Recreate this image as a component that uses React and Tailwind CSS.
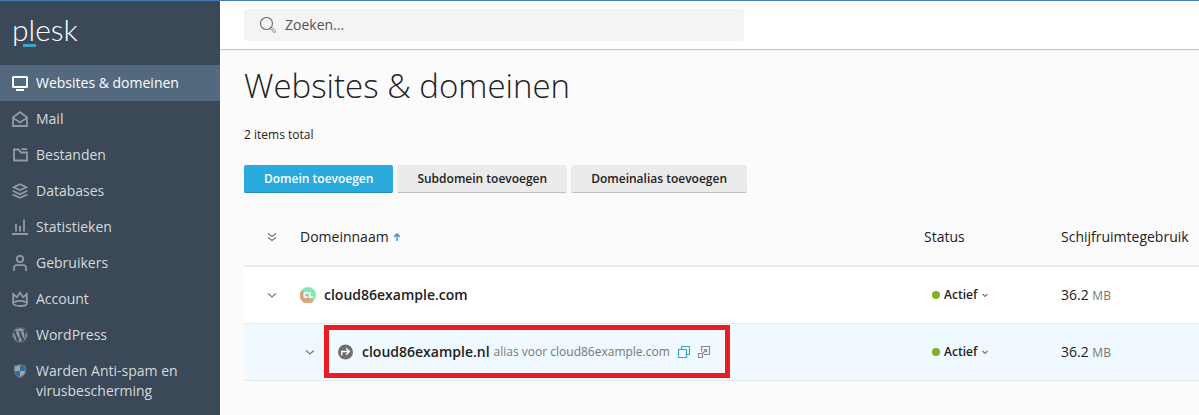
import { FaWordpress } from 'react-icons/fa6';
import clsx from 'clsx';

const Icon = ({ size = 16, className, children }) => (
    <svg width={size} height={size} viewBox={`0 0 ${size} ${size}`} fill="none" stroke="currentColor"
        strokeWidth="1.8" className={clsx('shrink-0', className)} aria-hidden="true">
        {children}
    </svg>
);

const MonitorIcon = () => (
    <Icon>
        <rect x="1" y="2" width="14" height="10" rx="0.5" strokeWidth="2" />
        <path d="M4 15h8" strokeWidth="2" />
    </Icon>
);

const MailIcon = () => (
    <Icon>
        <path d="M1 6.200 8 1.200l7 5V15H1z" />
        <path d="M1 6.800l7 4.600 7-4.600" />
    </Icon>
);

const FolderIcon = () => (
    <Icon>
        <path d="M2 1.500V13.500h13V5.500H9L6.500 2.500H1.100M9.500 2.200H15" />
    </Icon>
);

const LayersIcon = () => (
    <Icon>
        <path d="M8 1.300l6.400 2.900L8 7.100 1.600 4.200z" />
        <path d="M0.600 7.800L8 11.200l7.400-3.400M0.600 11.400L8 14.800l7.400-3.400" />
    </Icon>
);

const StatsIcon = () => (
    <Icon>
        <path d="M0 15h16M4 12.500V5M8 12.500V7M12 12.500V0.500" />
    </Icon>
);

const UserIcon = () => (
    <Icon>
        <circle cx="8" cy="4" r="3.200" />
        <path d="M2 16v-3.200a2.600 2.600 0 0 1 2.600-2.600h6.800a2.600 2.600 0 0 1 2.600 2.600V16" />
    </Icon>
);

const CrownIcon = () => (
    <Icon>
        <path d="M1.200 12.800V3.200l3.800 3L8 1.600l3 4.600 3.800-3v9.600" />
        <ellipse cx="8" cy="12.400" rx="6.800" ry="2.600" />
    </Icon>
);

const ShieldIcon = () => (
    <Icon>
        <g stroke="none">
            <path d="M2 2.500Q5 2.500 8 1q3 1.500 6 1.500V7c0 4-2.500 6.500-6 8-3.500-1.500-6-4-6-8z" fill="#6f7c87" />
            <path d="M8 2.300q2.300 1 5 1.200V8H8z" fill="#2f6f9f" />
            <path d="M3 8h5v5.800C5 12.500 3.200 10.800 3 8z" fill="#2f6f9f" />
            <path d="M3 3.500q2.700-.2 5-1.200V8H3z" fill="#9aa5ae" />
            <path d="M8 8h5c-.2 2.800-2 4.500-5 5.800z" fill="#9aa5ae" />
        </g>
    </Icon>
);

const SearchIcon = () => (
    <Icon className="text-[#777777]">
        <circle cx="6.500" cy="6.500" r="6" strokeWidth="1.200" />
        <path d="M10.500 10.500l1.200 0 3.600 3.400a1 1 0 0 1-1.400 1.400L10.400 11.700z" strokeWidth="1" />
    </Icon>
);

const ChevronIcon = ({ size = 10 }) => (
    <Icon size={size} className="text-[#777777]">
        {size === 10 ? <path d="M1 3.500l4 3.500 4-3.500" strokeWidth="1.200" /> : <path d="M1.500 3l2.500 2.500L6.500 3" strokeWidth="1.200" />}
    </Icon>
);

const navItems = [
    { label: 'Websites & domeinen', icon: <MonitorIcon />, active: true },
    { label: 'Mail', icon: <MailIcon /> },
    { label: 'Bestanden', icon: <FolderIcon /> },
    { label: 'Databases', icon: <LayersIcon /> },
    { label: 'Statistieken', icon: <StatsIcon /> },
    { label: 'Gebruikers', icon: <UserIcon /> },
    { label: 'Account', icon: <CrownIcon /> },
    { label: 'WordPress', icon: <FaWordpress size={16} className="shrink-0" /> },
    { label: 'Warden Anti-spam en virusbescherming', icon: <ShieldIcon /> },
];

const Sidebar = () => (
    <aside className="w-[220px] shrink-0 bg-[#3a4857]">
        <a href="#" className="relative flex h-16 items-center px-3 pb-2 font-[Lato] text-[30px] leading-8 font-light text-white">
            plesk
            <span className="absolute left-[23px] top-[43px] h-[3px] w-[13px] bg-[#3fa3bd]" />
        </a>
        <nav>
            {navItems.map(({ label, icon, active }) => (
                <a key={label} href="#"
                    className={clsx('flex gap-2 px-3 py-2 text-sm leading-5 font-medium',
                        active ? 'bg-[#536a7e] text-white' : 'text-[#d5dade]')}>
                    <span className={clsx('flex h-5 items-center', !active && 'text-[#909aa4]')}>{icon}</span>
                    {label}
                </a>
            ))}
        </nav>
    </aside>
);

const Button = ({ primary, children }) => (
    <button type="button"
        className={clsx('h-7 rounded-xs border-b px-5 text-xs font-semibold',
            primary ? 'border-[#1f88b5] bg-[#28aade] text-white' : 'border-[#bfbfbf] bg-[#ebebeb] text-[#222222]')}>
        {children}
    </button>
);

const StatusCell = () => (
    <td className="px-3">
        <button type="button" className="flex items-center gap-1 px-2 text-xs font-semibold">
            <span className="size-2 rounded-full bg-[#80b025]" />
            Actief
            <ChevronIcon size={8} />
        </button>
    </td>
);

const UsageCell = () => (
    <td className="pr-2 pl-3 text-sm">
        36.2 <span className="text-xs text-[#777777]">MB</span>
    </td>
);

const DomainTable = () => (
    <table className="mt-4 w-full border-collapse text-left">
        <thead>
            <tr className="h-[57px] border-b-2 border-[#ebebeb] text-sm">
                <th className="w-11 pl-[23px]">
                    <button type="button" aria-label="Alles uitklappen" className="block">
                        <Icon size={10} className="text-[#777777]">
                            <path d="M1 1.500l4 3 4-3M1 5.500l4 3 4-3" strokeWidth="1.200" />
                        </Icon>
                    </button>
                </th>
                <th className="px-3 font-normal">
                    <a href="#" className="flex items-center gap-1">
                        Domeinnaam
                        <Icon size={8} className="text-[#2a93c0]">
                            <path d="M4 8V1.200M1 4l3-3 3 3" strokeWidth="1.300" />
                        </Icon>
                    </a>
                </th>
                <th className="w-[137px] px-3 font-normal">Status</th>
                <th className="w-[150px] pr-2 pl-3 font-normal">Schijfruimtegebruik</th>
            </tr>
        </thead>
        <tbody>
            <tr className="h-[57px] border-b border-[#ebebeb] bg-white">
                <td className="pl-[23px]">
                    <button type="button" aria-label="Uitklappen" className="block"><ChevronIcon /></button>
                </td>
                <td className="px-3">
                    <div className="flex items-center gap-2">
                        <svg width="16" height="16" viewBox="0 0 16 16" className="shrink-0" aria-hidden="true">
                            <circle cx="8" cy="8" r="8" fill="#82e8b8" />
                            <path d="M1.500 3.300A8 8 0 1 0 13.700 13.700z" fill="#d8a47c" />
                            <text x="8" y="11" textAnchor="middle" fontSize="8" fontWeight="800" fill="#fff" fontFamily="Open Sans, sans-serif">CL</text>
                        </svg>
                        <a href="#" className="text-sm font-semibold">cloud86example.com</a>
                    </div>
                </td>
                <StatusCell />
                <UsageCell />
            </tr>
            <tr className="h-[57px] border-b border-[#e4e9ec] bg-[#f0f9ff]">
                <td />
                <td className="pl-[17px]">
                    <div className="flex items-center gap-[9px]">
                        <button type="button" aria-label="Uitklappen"><ChevronIcon /></button>
                        <div className="flex h-[53px] items-center border-5 border-[#ed1c24] pr-[15px] pl-[9px]">
                            <svg width="16" height="16" viewBox="0 0 16 16" className="shrink-0" aria-hidden="true">
                                <circle cx="7.500" cy="8" r="7.500" fill="#6f6f6f" />
                                <path d="M3.700 11.500V7.500h7.300M8.200 4.300l3.200 3.200-3.200 3.200" fill="none" stroke="#fff" strokeWidth="1.300" />
                            </svg>
                            <a href="#" className="ml-2 text-sm font-semibold">cloud86example.nl</a>
                            <span className="ml-1 text-xs text-[#777777]">alias voor cloud86example.com</span>
                            <button type="button" aria-label="Kopiëren" className="ml-2">
                                <Icon size={12} className="text-[#35a8d6]">
                                    <path d="M0.500 3.500h8v8h-8zM3.500 3V0.500h8v8H9" strokeWidth="1.200" />
                                </Icon>
                            </button>
                            <a href="#" aria-label="Openen" className="ml-2">
                                <Icon size={12} className="text-[#858a8d]">
                                    <path d="M3.500 5.500V0.500h8v8H6M0.500 7.500h4v4h-4zM4.500 7.500l4-4M5.800 3.500h2.700v2.700" strokeWidth="1.200" />
                                </Icon>
                            </a>
                        </div>
                    </div>
                </td>
                <StatusCell />
                <UsageCell />
            </tr>
        </tbody>
    </table>
);

export default function App() {
    return (
        <div className="flex min-h-screen border-t border-[#4a7ab5] bg-[#fbfbfb] font-['Open_Sans',sans-serif] text-[#222222]">
            <Sidebar />
            <div className="min-w-0 flex-1">
                <header className="border-b border-[#c8c8c8] bg-white px-6 py-2 shadow-xs">
                    <label className="flex h-8 max-w-[500px] items-center gap-[9px] rounded-sm bg-[#f4f4f4] px-4">
                        <SearchIcon />
                        <input type="search" aria-label="Zoeken" placeholder="Zoeken..."
                            className="w-full bg-transparent text-sm outline-none placeholder:text-[#555555]" />
                    </label>
                </header>
                <main className="pt-4 pl-6">
                    <h1 className="text-[33px] leading-[39px] font-light">Websites & domeinen</h1>
                    <p className="mt-5 text-xs leading-5">2 items total</p>
                    <div className="mt-5 flex gap-1">
                        <Button primary>Domein toevoegen</Button>
                        <Button>Subdomein toevoegen</Button>
                        <Button>Domeinalias toevoegen</Button>
                    </div>
                    <DomainTable />
                </main>
            </div>
        </div>
    );
}
